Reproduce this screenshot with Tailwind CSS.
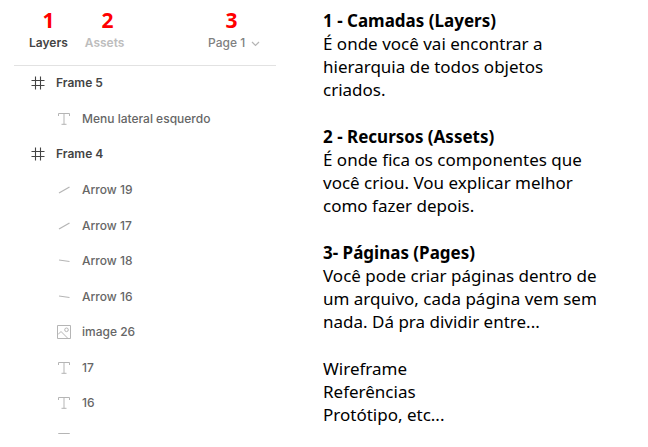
<!DOCTYPE html>
<html lang="pt-BR">
<head>
<meta charset="utf-8">
<meta name="viewport" content="width=device-width, initial-scale=1">
<title>Menu lateral esquerdo</title>
<script src="https://cdn.jsdelivr.net/npm/@tailwindcss/browser@4"></script>
</head>
<body class="bg-white">
<svg class="hidden" aria-hidden="true">
  <symbol id="frame" viewBox="0 0 14 14"><path d="M4.500 .5v13M9.500 .5v13M.5 4.500h13M.5 9.500h13" fill="none" stroke="currentColor" stroke-width="1.1"/></symbol>
  <symbol id="text" viewBox="0 0 14 14"><path d="M1.500 4V1.500h11V4M7 1.500v11M4.500 12.300h5" fill="none" stroke="currentColor"/></symbol>
  <symbol id="rise" viewBox="0 0 14 14"><path d="M2 10 12.500 4" fill="none" stroke="currentColor" stroke-width="1.300"/></symbol>
  <symbol id="fall" viewBox="0 0 14 14"><path d="M2 6 12.500 7.500" fill="none" stroke="currentColor" stroke-width="1.100"/></symbol>
  <symbol id="image" viewBox="0 0 14 14"><path d="M.5.5h13v13H.5zM1 9.500 4 6.500l7 7" fill="none" stroke="currentColor"/><circle cx="9.500" cy="4.800" r="1.800" fill="none" stroke="currentColor"/></symbol>
</svg>
<main class="flex h-screen gap-[47px] overflow-hidden pb-[13px] pl-[14px]">
  <section class="w-[42%] max-w-[262px] shrink-0 overflow-hidden font-['Inter',sans-serif] text-[12px] font-medium text-[#666]" aria-label="Layers">
    <header class="flex items-start border-b border-[#e2e2e2] pr-[16px] pb-[19px] pl-[15px]">
      <div class="flex flex-col items-center">
        <span class="font-['Open_Sans',sans-serif] text-[21px] leading-[40px] font-bold text-[#f00]">1</span>
        <button class="flex h-[6px] items-center font-semibold text-[#444]">Layers</button>
      </div>
      <div class="ml-[17px] flex flex-col items-center">
        <span class="pl-[6px] font-['Open_Sans',sans-serif] text-[21px] leading-[40px] font-bold text-[#f00]">2</span>
        <button class="flex h-[6px] items-center font-semibold text-[#bdbdbd]">Assets</button>
      </div>
      <div class="ml-auto flex flex-col items-center">
        <span class="pr-[5px] font-['Open_Sans',sans-serif] text-[21px] leading-[40px] font-bold text-[#f00]">3</span>
        <div class="relative flex h-[6px] items-center">
          <select class="appearance-none bg-transparent pr-[14px] text-[#808080]" aria-label="Page"><option>Page 1</option></select>
          <svg class="pointer-events-none absolute right-0 size-[9px] text-[#b5b5b5]" viewBox="0 0 9 9"><path d="M1 3l3.500 3.500L8 3" fill="none" stroke="currentColor" stroke-width="1.200"/></svg>
        </div>
      </div>
    </header>
    <ul class="[&>li]:flex [&>li]:items-center [&>li]:gap-[11px] [&>li:nth-child(even)]:h-[36px] [&>li:nth-child(odd)]:h-[35px] [&_svg]:size-[14px] [&_svg]:shrink-0">
      <li class="pb-[2px] pl-[17px] font-semibold text-[#444]"><svg><use href="#frame"/></svg>Frame 5</li>
      <li class="pl-[43px]"><svg class="text-[#b5b5b5]"><use href="#text"/></svg>Menu lateral esquerdo</li>
      <li class="pb-[2px] pl-[17px] font-semibold text-[#444]"><svg><use href="#frame"/></svg>Frame 4</li>
      <li class="pl-[43px]"><svg class="text-[#b5b5b5]"><use href="#rise"/></svg>Arrow 19</li>
      <li class="pl-[43px]"><svg class="text-[#b5b5b5]"><use href="#rise"/></svg>Arrow 17</li>
      <li class="pl-[43px]"><svg class="text-[#b5b5b5]"><use href="#fall"/></svg>Arrow 18</li>
      <li class="pl-[43px]"><svg class="text-[#b5b5b5]"><use href="#fall"/></svg>Arrow 16</li>
      <li class="pl-[43px]"><svg class="text-[#b5b5b5]"><use href="#image"/></svg>image 26</li>
      <li class="pl-[43px]"><svg class="text-[#b5b5b5]"><use href="#text"/></svg>17</li>
      <li class="pl-[43px]"><svg class="text-[#b5b5b5]"><use href="#text"/></svg>16</li>
      <li class="pl-[43px]"><svg class="text-[#b5b5b5]"><use href="#text"/></svg></li>
    </ul>
  </section>
  <article class="flex max-w-[290px] flex-1 flex-col gap-[24px] pt-[9px] font-['Noto_Sans',sans-serif] text-[17px] leading-[23px] text-black">
    <section>
      <h2 class="font-bold">1 - Camadas (Layers)</h2>
      <p>É onde você vai encontrar a<br>hierarquia de todos objetos<br>criados.</p>
    </section>
    <section>
      <h2 class="font-bold">2 - Recursos (Assets)</h2>
      <p>É onde fica os componentes que<br>você criou. Vou explicar melhor<br>como fazer depois.</p>
    </section>
    <section>
      <h2 class="font-bold">3- Páginas (Pages)</h2>
      <p>Você pode criar páginas dentro de<br>um arquivo, cada página vem sem<br>nada. Dá pra dividir entre...</p>
    </section>
    <ul>
      <li>Wireframe</li>
      <li>Referências</li>
      <li>Protótipo, etc...</li>
    </ul>
  </article>
</main>
</body>
</html>
